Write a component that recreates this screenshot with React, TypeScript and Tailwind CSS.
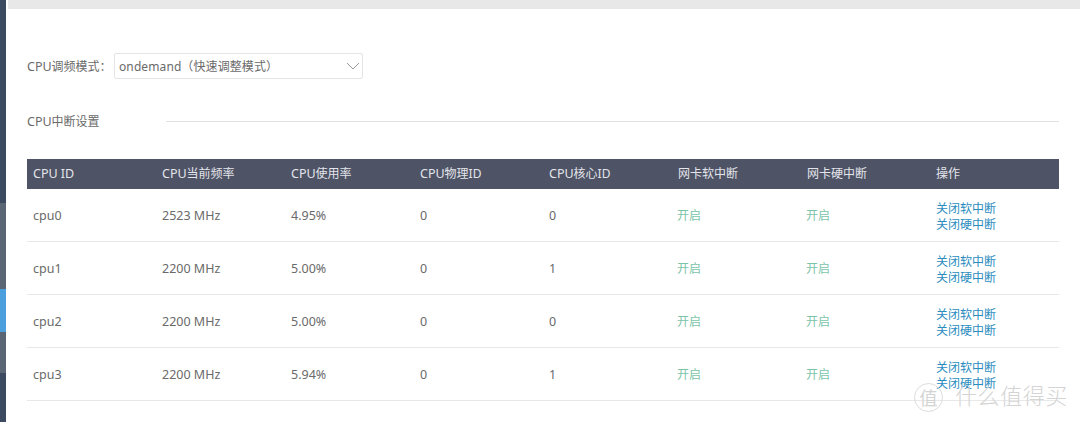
const headers = [
  ["CPU ID", ""],
  ["CPU", "当前频率"],
  ["CPU", "使用率"],
  ["CPU", "物理ID"],
  ["CPU", "核心ID"],
  ["", "网卡软中断"],
  ["", "网卡硬中断"],
  ["", "操作"],
];

const rows = [
  { id: "cpu0", freq: "2523 MHz", usage: "4.95%", phys: "0", core: "0" },
  { id: "cpu1", freq: "2200 MHz", usage: "5.00%", phys: "0", core: "1" },
  { id: "cpu2", freq: "2200 MHz", usage: "5.00%", phys: "0", core: "0" },
  { id: "cpu3", freq: "2200 MHz", usage: "5.94%", phys: "0", core: "1" },
];

function Sidebar() {
  return (
    <div className="flex w-[6px] shrink-0 flex-col">
      <div className="h-[203px] bg-[#3b4a5e]" />
      <div className="h-[86px] bg-[#5b6675]" />
      <div className="h-[43px] bg-[#4a9fdc]" />
      <div className="h-[41px] bg-[#5b6675]" />
      <div className="flex-1 bg-[#3b4a5e]" />
    </div>
  );
}

export default function App() {
  return (
    <div
      className="relative flex h-[422px] w-[1080px] overflow-hidden bg-white text-[12px] text-[#6a6a6a]"
      style={{ fontFamily: '"Noto Sans", "Noto Sans CJK SC", sans-serif' }}
    >
      <Sidebar />
      <div className="flex min-w-0 flex-1 flex-col">
        <div className="ml-[2px] h-[9px] bg-[#e8e8e8]" />
        <div className="px-[21px]">
          <div className="mt-[44px] flex items-center">
            <span className="w-[87px] whitespace-nowrap pt-[2px]">
              <span className="text-[12.5px]">CPU</span>调频模式：
            </span>
            <div className="flex h-[26px] w-[249px] items-center justify-between rounded-[2px] border border-[#e4e4e4] pl-[4px] pr-[2px]">
              <span className="whitespace-nowrap pt-[2px] tracking-[0.1px]">ondemand（快速调整模式）</span>
              <svg width="14" height="8" viewBox="0 0 14 8" fill="none" stroke="#999" strokeWidth="1">
                <path d="M1 1l6 6 6-6" />
              </svg>
            </div>
          </div>
          <div className="mt-[32px] flex h-[20px] items-center">
            <span className="w-[139px] whitespace-nowrap pt-[2px]">
              <span className="text-[12.5px]">CPU</span>中断设置
            </span>
            <div className="h-px flex-1 bg-[#e2e2e2]" />
          </div>
          <table className="mt-[28px] w-[1032px] table-fixed border-separate border-spacing-0">
            <thead>
              <tr className="h-[30px] bg-[#4e5366] text-left text-[#e4e5ea]">
                {headers.map(([latin, zh]) => (
                  <th key={latin + zh} className="w-[129px] pl-[6px] font-normal">
                    <span className="text-[12.5px]">{latin}</span>
                    {zh}
                  </th>
                ))}
              </tr>
            </thead>
            <tbody>
              {rows.map((r) => (
                <tr key={r.id} className="h-[53px] text-[12.5px]">
                  <td className="border-b border-[#e8e8e8] pl-[6px] pt-[2px]">{r.id}</td>
                  <td className="border-b border-[#e8e8e8] pl-[6px] pt-[2px]">{r.freq}</td>
                  <td className="border-b border-[#e8e8e8] pl-[6px] pt-[2px]">{r.usage}</td>
                  <td className="border-b border-[#e8e8e8] pl-[6px] pt-[2px]">{r.phys}</td>
                  <td className="border-b border-[#e8e8e8] pl-[6px] pt-[2px]">{r.core}</td>
                  <td className="border-b border-[#e8e8e8] pl-[5px] pt-[2px] text-[12px] text-[#7cc4a8]">开启</td>
                  <td className="border-b border-[#e8e8e8] pl-[5px] pt-[2px] text-[12px] text-[#7cc4a8]">开启</td>
                  <td className="border-b border-[#e8e8e8] pl-[6px] pt-[4px] text-[12px] leading-[16px] text-[#2b8cbe]">
                    <div>关闭软中断</div>
                    <div>关闭硬中断</div>
                  </td>
                </tr>
              ))}
            </tbody>
          </table>
        </div>
      </div>
      {/* site watermark */}
      <div className="absolute left-[914px] top-[383px] flex items-center gap-[12px] text-[#d4d4d4]">
        <span className="flex h-[29px] w-[29px] items-center justify-center rounded-full border border-[#dcdcdc] text-[18px] leading-none">
          值
        </span>
        <span className="pb-[6px] text-[22px] font-light leading-none tracking-[0.6px]">什么值得买</span>
      </div>
    </div>
  );
}
